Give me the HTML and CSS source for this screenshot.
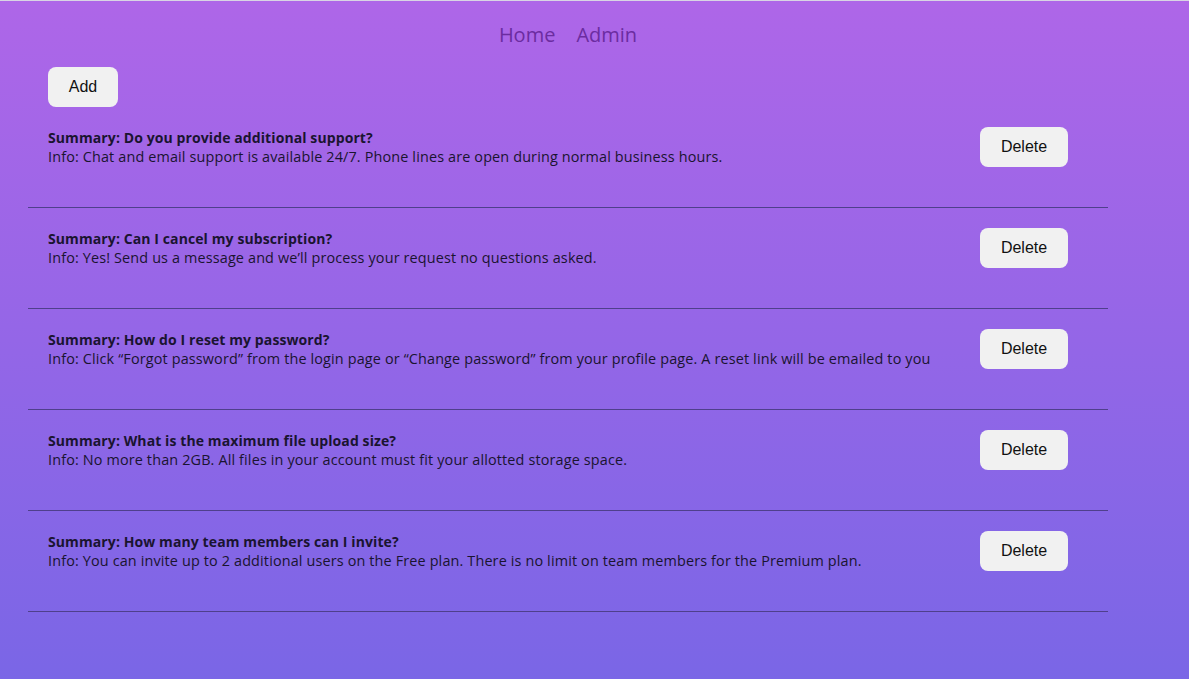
FILE: index.html
```html
<!DOCTYPE html>
<html lang="en">
<head>
<meta charset="utf-8">
<title>FAQ Admin</title>
<link rel="stylesheet" href="styles.css">
</head>
<body>
<div class="page">
  <nav class="nav">
    <a class="nav-link" href="#">Home</a>
    <a class="nav-link" href="#">Admin</a>
  </nav>
  <div class="toolbar">
    <button class="btn btn-add">Add</button>
  </div>
  <ul class="faq-list">
    <li class="faq-row">
      <div class="faq-text">
        <div class="faq-summary">Summary: Do you provide additional support?</div>
        <div class="faq-info">Info: Chat and email support is available 24/7. Phone lines are open during normal business hours.</div>
      </div>
      <button class="btn btn-delete">Delete</button>
    </li>
    <li class="faq-row">
      <div class="faq-text">
        <div class="faq-summary">Summary: Can I cancel my subscription?</div>
        <div class="faq-info">Info: Yes! Send us a message and we’ll process your request no questions asked.</div>
      </div>
      <button class="btn btn-delete">Delete</button>
    </li>
    <li class="faq-row">
      <div class="faq-text">
        <div class="faq-summary">Summary: How do I reset my password?</div>
        <div class="faq-info">Info: Click “Forgot password” from the login page or “Change password” from your profile page. A reset link will be emailed to you</div>
      </div>
      <button class="btn btn-delete">Delete</button>
    </li>
    <li class="faq-row">
      <div class="faq-text">
        <div class="faq-summary">Summary: What is the maximum file upload size?</div>
        <div class="faq-info">Info: No more than 2GB. All files in your account must fit your allotted storage space.</div>
      </div>
      <button class="btn btn-delete">Delete</button>
    </li>
    <li class="faq-row">
      <div class="faq-text">
        <div class="faq-summary">Summary: How many team members can I invite?</div>
        <div class="faq-info">Info: You can invite up to 2 additional users on the Free plan. There is no limit on team members for the Premium plan.</div>
      </div>
      <button class="btn btn-delete">Delete</button>
    </li>
  </ul>
</div>
</body>
</html>
```

FILE: styles.css
```css
html, body {
  margin: 0;
  padding: 0;
}
body {
  min-height: 679px;
  border-top: 1px solid #d9d4e4;
  background: linear-gradient(to bottom, #ae66e8 0%, #7a66e6 100%);
  font-family: "Open Sans", "Noto Sans", sans-serif;
  color: #1a1430;
  box-sizing: border-box;
}
.page {
  padding: 19px 81px 40px 28px;
}
.nav {
  display: flex;
  justify-content: center;
  gap: 21px;
  height: 29px;
  align-items: center;
}
.nav-link {
  font-size: 20px;
  color: #6b2ca0;
  text-decoration: none;
}
.toolbar {
  padding: 18px 20px 0;
}
.btn {
  font-family: "Liberation Sans", Arial, sans-serif;
  font-size: 16px;
  color: #111;
  background: #f1f1f1;
  border: none;
  border-radius: 8px;
  height: 40px;
  padding: 0 20px;
  cursor: pointer;
}
.btn-add {
  width: 70px;
  padding: 0;
}
.faq-list {
  list-style: none;
  margin: 0;
  padding: 0;
}
.faq-row {
  display: flex;
  align-items: center;
  justify-content: space-between;
  padding: 20px 40px 40px 20px;
  border-bottom: 1px solid #4f3f8c;
}
.faq-text {
  font-size: 14px;
  line-height: 19px;
}
.faq-summary {
  font-weight: 700;
  letter-spacing: 0.1px;
}
.faq-info {
  font-size: 14.4px;
  letter-spacing: 0.15px;
}
.btn-delete {
  width: 88px;
  padding: 0;
  flex-shrink: 0;
}
```
